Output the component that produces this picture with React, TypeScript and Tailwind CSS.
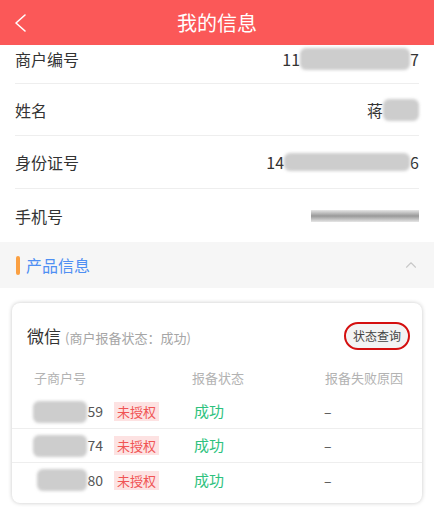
import { ChevronUp } from "lucide-react";

const font = { fontFamily: '"Noto Sans CJK SC", "Noto Sans", sans-serif' };

function Redacted({ className }: { className: string }) {
  return <span className={`inline-block rounded-md bg-[#cdcdcd] blur-[1.5px] ${className}`} />;
}

const subs = [
  { tail: "59", mask: "w-[54px]" },
  { tail: "74", mask: "w-[56px]" },
  { tail: "80", mask: "w-[50px]" },
];

export default function App() {
  return (
    <div className="h-[516px] w-[434px] overflow-hidden bg-white" style={font}>
      <header className="relative flex h-[45px] items-center justify-center bg-[#fb5858]">
        <svg className="absolute left-[13px] top-[13px]" width="14" height="20" viewBox="0 0 14 20" fill="none">
          <path d="M12 2 L3 10 L12 18" stroke="white" strokeWidth="1.6" strokeLinecap="round" strokeLinejoin="round" />
        </svg>
        <h1 className="text-[20px] text-white">我的信息</h1>
      </header>

      <div className="px-[15px]">
        <div className="flex h-[39px] items-center justify-between border-b border-[#eeeeee] pb-[11px] text-[16px] text-[#333]">
          <span>商户编号</span>
          <span className="flex items-center">
            11<Redacted className="h-[22px] w-[110px]" />7
          </span>
        </div>
        <div className="flex h-[52px] items-center justify-between border-b border-[#eeeeee] text-[16px] text-[#333]">
          <span>姓名</span>
          <span className="flex items-center">
            蒋<Redacted className="h-[22px] w-[36px]" />
          </span>
        </div>
        <div className="flex h-[53px] items-center justify-between border-b border-[#eeeeee] text-[16px] text-[#333]">
          <span>身份证号</span>
          <span className="flex items-center">
            14<Redacted className="h-[18px] w-[126px]" />6
          </span>
        </div>
        <div className="flex h-[53px] items-center justify-between text-[16px] text-[#333]">
          <span>手机号</span>
          <span className="h-[12px] w-[108px] bg-gradient-to-b from-[#e6e6e6] via-[#999999] to-[#e6e6e6] blur-[0.6px]" />
        </div>
      </div>

      <div className="flex h-[46px] items-center justify-between bg-[#f6f6f6] pl-[16px] pr-[14px]">
        <div className="flex items-center gap-[6px]">
          <span className="h-[19px] w-[4px] rounded-full bg-[#fba042]" />
          <span className="text-[16px] text-[#4f8ff3]">产品信息</span>
        </div>
        <ChevronUp className="size-[18px] text-[#c8c8c8]" strokeWidth={1.5} />
      </div>

      <div className="px-[12px] pt-[15px]">
        <div className="rounded-[8px] bg-white shadow-[0_0_4px_rgba(0,0,0,0.22)]">
          <div className="flex items-center justify-between pl-[15px] pr-[12px] pt-[19px]">
            <div className="flex items-baseline">
              <span className="text-[17px] text-[#333]">微信</span>
              <span className="ml-[4px] text-[13px] text-[#a6a6a6]">(商户报备状态：成功)</span>
            </div>
            <button className="flex h-[28px] w-[66px] items-center justify-center rounded-full border-2 border-[#d40f0f] bg-[#f3f3f3] text-[12px] text-[#444]">
              状态查询
            </button>
          </div>
          <div className="mt-[14px] grid h-[28px] grid-cols-[158px_133px_1fr] items-center pl-[22px] text-[13px] text-[#b3b3b3]">
            <span>子商户号</span>
            <span>报备状态</span>
            <span>报备失败原因</span>
          </div>
          <div className="pb-[6px] pt-[3px]">
            {subs.map((s, i) => (
              <div
                key={s.tail}
                className={`grid h-[34px] grid-cols-[161px_130px_1fr] items-center pl-[21px] ${i < 2 ? "border-b border-[#eeeeee]" : ""}`}
              >
                <span className="flex items-center">
                  <span className="flex w-[70px] items-center justify-end">
                    <Redacted className={`h-[22px] ${s.mask}`} />
                    <span className="text-[14px] text-[#555]">{s.tail}</span>
                  </span>
                  <span className="ml-[11px] bg-[#fde2e2] px-[3px] text-[13px] leading-[19px] text-[#f05454]">未授权</span>
                </span>
                <span className="text-[15px] text-[#2ec27e]">成功</span>
                <span className="text-[14px] text-[#555]">–</span>
              </div>
            ))}
          </div>
        </div>
      </div>
    </div>
  );
}
